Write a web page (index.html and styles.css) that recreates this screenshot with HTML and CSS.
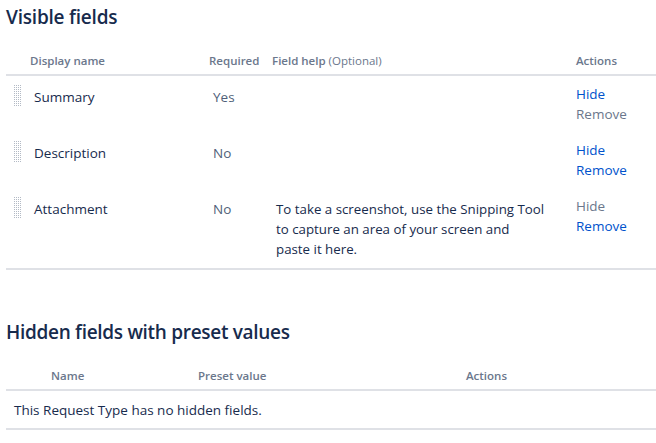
FILE: index.html
```html
<!DOCTYPE html>
<html>
<head>
<meta charset="utf-8">
<link rel="stylesheet" href="styles.css">
</head>
<body>
<svg class="defs" width="0" height="0" aria-hidden="true">
  <defs>
    <pattern id="dots" x="0" y="0" width="2" height="2" patternUnits="userSpaceOnUse">
      <rect x="0" y="0" width="1" height="1" fill="#b3bac5"/>
    </pattern>
  </defs>
</svg>
<div class="page">
  <h2 class="title">Visible fields</h2>
  <table class="fields">
    <colgroup>
      <col class="c-drag"><col class="c-name"><col class="c-req"><col class="c-help"><col class="c-act">
    </colgroup>
    <thead>
      <tr>
        <th></th>
        <th>Display name</th>
        <th>Required</th>
        <th>Field help <span class="opt">(Optional)</span></th>
        <th class="act-h">Actions</th>
      </tr>
    </thead>
    <tbody>
      <tr>
        <td class="drag"><svg class="handle" width="8" height="22" viewBox="0 0 8 22"><rect width="8" height="22" fill="url(#dots)"/></svg></td>
        <td class="name">Summary</td>
        <td class="req">Yes</td>
        <td class="help"></td>
        <td class="act"><a class="link">Hide</a><span class="muted">Remove</span></td>
      </tr>
      <tr>
        <td class="drag"><svg class="handle" width="8" height="22" viewBox="0 0 8 22"><rect width="8" height="22" fill="url(#dots)"/></svg></td>
        <td class="name">Description</td>
        <td class="req">No</td>
        <td class="help"></td>
        <td class="act"><a class="link">Hide</a><a class="link">Remove</a></td>
      </tr>
      <tr>
        <td class="drag"><svg class="handle" width="8" height="22" viewBox="0 0 8 22"><rect width="8" height="22" fill="url(#dots)"/></svg></td>
        <td class="name">Attachment</td>
        <td class="req">No</td>
        <td class="help">To take a screenshot, use the Snipping Tool<br>to capture an area of your screen and<br>paste it here.</td>
        <td class="act"><span class="muted">Hide</span><a class="link">Remove</a></td>
      </tr>
    </tbody>
  </table>

  <h2 class="title title-hidden">Hidden fields with preset values</h2>
  <table class="hidden">
    <colgroup>
      <col class="h-name"><col class="h-val"><col class="h-act">
    </colgroup>
    <thead>
      <tr>
        <th class="hn">Name</th>
        <th>Preset value</th>
        <th>Actions</th>
      </tr>
    </thead>
    <tbody>
      <tr>
        <td colspan="3" class="empty">This Request Type has no hidden fields.</td>
      </tr>
    </tbody>
  </table>
</div>
</body>
</html>
```
FILE: styles.css
```css
html, body {
  margin: 0;
  padding: 0;
  background: #ffffff;
}
body {
  font-family: "Open Sans", "Noto Sans", sans-serif;
  color: #172b4d;
  overflow: hidden;
}
.defs {
  position: absolute;
  width: 0;
  height: 0;
}
.page {
  padding-left: 6px;
  width: 660px;
}
.title {
  margin: 0;
  padding-top: 5px;
  font-size: 19px;
  line-height: 24px;
  font-weight: 600;
  color: #172b4d;
  letter-spacing: -0.2px;
}
.title-hidden {
  padding-top: 50px;
  letter-spacing: -0.3px;
}
table {
  border-collapse: collapse;
  table-layout: fixed;
  width: 654px;
}
.c-drag { width: 20px; }
.c-name { width: 179px; }
.c-req { width: 63px; }
.c-help { width: 304px; }
.c-act { width: 88px; }
th {
  text-align: left;
  font-size: 11.5px;
  line-height: 16px;
  font-weight: 600;
  color: #6b778c;
  padding: 24px 0 5px 4px;
  border-bottom: 2px solid #dfe1e6;
  white-space: nowrap;
}
th .opt { font-weight: 400; }
td {
  vertical-align: top;
  font-size: 13.5px;
  line-height: 20px;
  padding: 11px 0 0 8px;
}
td.drag { padding: 9px 0 0 8px; }
.handle {
  display: block;
}
td.name { color: #172b4d; }
td.req { color: #505f79; }
td.help { color: #172b4d; padding-bottom: 9px; font-size: 13.3px; }
td.act {
  padding: 8px 0 8px 4px;
}
.act a, .act span { display: block; }
.link { color: #0052cc; text-decoration: none; }
.muted { color: #6b778c; }
.fields { border-bottom: 2px solid #dfe1e6; }

.h-name { width: 192px; }
.h-val { width: 268px; }
.h-act { width: 194px; }
.hidden th {
  padding: 24px 0 5px 0;
}
.hidden th.hn { padding-left: 45px; }
.hidden .empty {
  padding: 9px 0 8px 8px;
  color: #172b4d;
  border-bottom: 2px solid #dfe1e6;
}
```
